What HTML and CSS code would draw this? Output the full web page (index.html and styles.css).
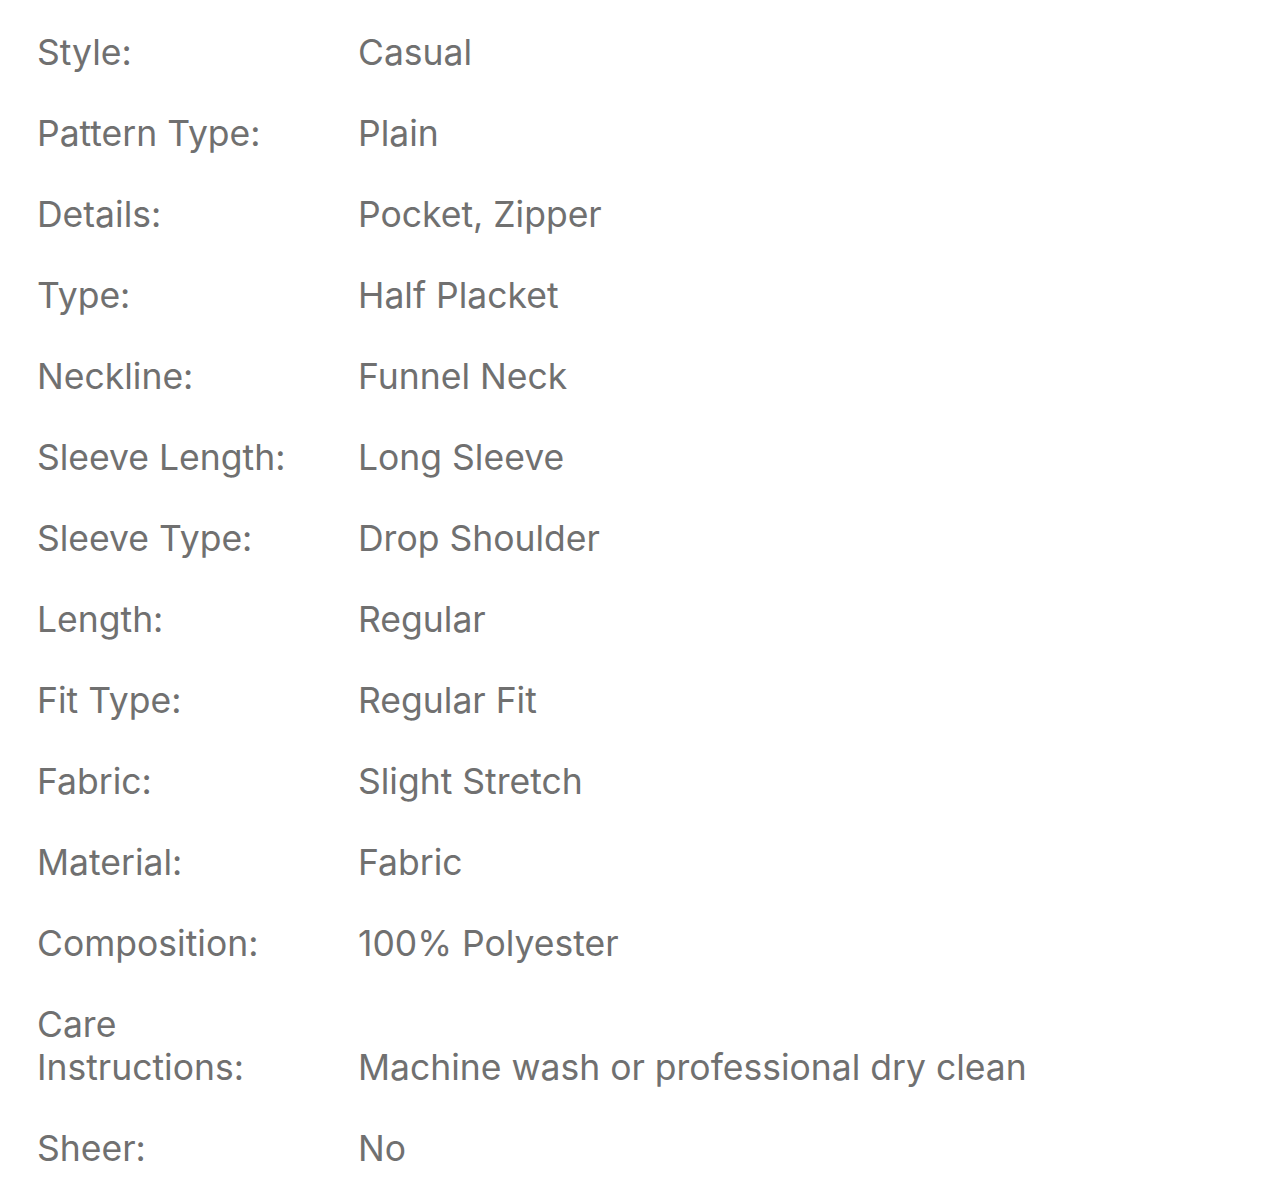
FILE: index.html
```html
<!DOCTYPE html>
<html lang="en">
<head>
<meta charset="utf-8">
<title>Product details</title>
<link rel="stylesheet" href="styles.css">
</head>
<body>
<dl class="specs">
  <div class="row"><dt class="label">Style:</dt><dd class="value">Casual</dd></div>
  <div class="row"><dt class="label">Pattern Type:</dt><dd class="value">Plain</dd></div>
  <div class="row"><dt class="label">Details:</dt><dd class="value">Pocket, Zipper</dd></div>
  <div class="row"><dt class="label">Type:</dt><dd class="value">Half Placket</dd></div>
  <div class="row"><dt class="label">Neckline:</dt><dd class="value">Funnel Neck</dd></div>
  <div class="row"><dt class="label">Sleeve Length:</dt><dd class="value">Long Sleeve</dd></div>
  <div class="row"><dt class="label">Sleeve Type:</dt><dd class="value">Drop Shoulder</dd></div>
  <div class="row"><dt class="label">Length:</dt><dd class="value">Regular</dd></div>
  <div class="row"><dt class="label">Fit Type:</dt><dd class="value">Regular Fit</dd></div>
  <div class="row"><dt class="label">Fabric:</dt><dd class="value">Slight Stretch</dd></div>
  <div class="row"><dt class="label">Material:</dt><dd class="value">Fabric</dd></div>
  <div class="row"><dt class="label">Composition:</dt><dd class="value">100% Polyester</dd></div>
  <div class="row"><dt class="label">Care Instructions:</dt><dd class="value">Machine wash or professional dry clean</dd></div>
  <div class="row"><dt class="label">Sheer:</dt><dd class="value">No</dd></div>
</dl>
</body>
</html>
```
FILE: styles.css
```css
html, body {
  margin: 0;
  padding: 0;
  background: #ffffff;
}
body {
  font-family: "Inter", "Roboto", "Liberation Sans", sans-serif;
  color: #707070;
}
.specs {
  margin: 0;
  padding: 31px 0 0 37px;
  display: flex;
  flex-direction: column;
  gap: 38px;
}
.row {
  display: flex;
  align-items: flex-end;
}
.label {
  width: 290px;
  flex: none;
  margin: 0 31px 0 0;
  font-size: 35.5px;
  line-height: 43px;
}
.value {
  margin: 0;
  font-size: 35.5px;
  line-height: 43px;
}
```
